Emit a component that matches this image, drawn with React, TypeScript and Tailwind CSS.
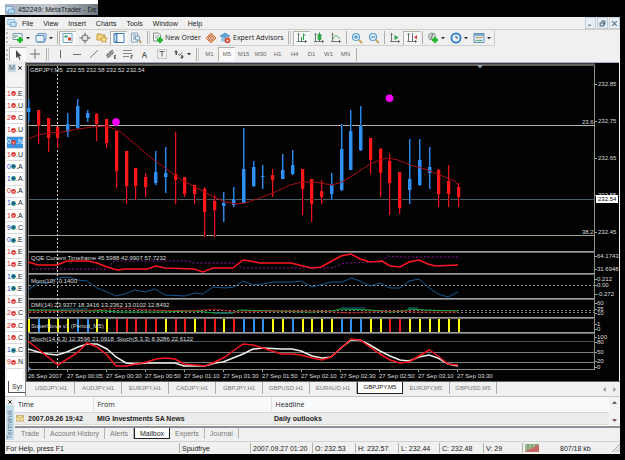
import React from "react";

type Candle = [string, number, number, number, number];

// colour, wick top, wick bottom, body top, body bottom
const candles: Candle[] = [
  ["b", 99, 122, 108, 112], ["r", 110, 144, 110, 126], ["r", 118, 152, 118, 138], ["r", 127, 148, 127, 138],
  ["b", 113, 137, 124, 132], ["b", 99, 129, 106, 128], ["b", 110, 122, 113, 118], ["r", 113, 141, 114, 124],
  ["r", 119, 148, 119, 143], ["r", 131, 188, 131, 171], ["r", 151, 204, 151, 186], ["r", 168, 200, 168, 186],
  ["r", 173, 197, 177, 187], ["b", 151, 185, 172, 183], ["b", 147, 193, 173, 177], ["r", 132, 204, 174, 180],
  ["r", 177, 197, 177, 194], ["r", 185, 204, 185, 194], ["r", 187, 237, 189, 212], ["r", 195, 237, 201, 210],
  ["b", 192, 222, 203, 206], ["b", 187, 207, 199, 205], ["b", 128, 203, 169, 203], ["b", 161, 187, 167, 186],
  ["b", 165, 189, 176, 177], ["r", 169, 197, 175, 180], ["b", 154, 179, 170, 179], ["b", 150, 175, 165, 174],
  ["r", 169, 215, 169, 189], ["r", 179, 222, 179, 204], ["r", 180, 204, 191, 197], ["b", 173, 200, 185, 194],
  ["b", 124, 191, 149, 190], ["b", 110, 170, 131, 170], ["b", 106, 151, 126, 150], ["r", 138, 174, 138, 160],
  ["r", 148, 197, 149, 173], ["r", 154, 215, 161, 183], ["r", 172, 214, 172, 208], ["b", 139, 204, 179, 190],
  ["b", 139, 186, 160, 185], ["b", 147, 189, 167, 173], ["r", 169, 207, 170, 194], ["r", 165, 207, 181, 194],
  ["r", 183, 207, 187, 197],
];
const barX = (i: number) => Math.round(28 + i * 9.77);
const superNova = "ybyyybbyyrrrrryrryrryrbbbyybyyyybbbyyrryyyyyy".split("");
const tone: Record<string, string> = { y: "#ffff10", b: "#2f93f5", r: "#f01c20" };

const ma = "28,139 38,135 48,133 62,132 78,129 92,127 105,126 112,128 122,133 135,144 150,157 165,168 180,179 195,187 210,195 225,202 237,204 245,203 260,198 275,192 290,185 302,182 315,182 332,185 342,182 355,174 370,164 380,160 388,158 398,160 410,165 425,169 440,175 455,181 458,185";
const qqe = "28,262 38,265 57,265 67,261 88,261 97,263 107,267 117,270 125,269 147,269 156,266 165,268 194,269 203,272 213,268 233,268 243,260 250,261 260,263 291,263 303,266 312,268 321,267 330,262 341,256 351,254 360,259 370,262 382,261 390,266 400,267 409,262 419,260 428,264 435,266 458,265";
const qqeSlow = "28,269 106,269 114,261 188,261 194,263 235,263 242,268 331,268 345,263 380,262 388,256 400,257 458,257";
const mom = "28,290 38,283 48,283 58,278 68,277 78,280 87,281 97,288 107,292 116,296 125,294 135,290 145,292 155,289 165,295 185,296 195,293 203,294 213,287 225,288 234,287 243,281 253,285 263,284 273,282 292,282 301,281 312,287 331,282 342,282 351,278 360,281 370,286 380,283 390,288 400,288 409,281 419,279 428,287 438,294 448,297 458,292";
const dmiGreen = "28,310 60,310 70,311 105,311 117,312 160,312 195,311 205,312 215,313 233,313 240,310 270,311 310,312 333,311 340,309 370,310 390,312 404,311 410,309 425,310 458,311";
const dmiRed = "28,312 80,311 105,309 122,308 150,310 190,311 215,309 235,312 280,311 320,311 350,313 365,312 400,311 415,312 440,312 458,312";
const stochWhite = "28,349 38,352 48,354 57,355 67,352 78,347 87,344 97,344 107,349 116,357 126,363 135,364 147,363 175,363 184,366 205,366 215,363 223,362 233,358 243,354 253,349 263,348 282,349 292,349 301,351 312,356 322,358 331,357 341,348 351,340 360,340 370,345 380,351 390,356 400,360 409,361 419,357 429,355 438,358 448,364 458,366";
const stochRed = "28,341 48,357 58,365 77,353 87,343 97,347 107,355 116,366 126,366 147,362 156,359 165,358 175,359 184,364 205,366 215,362 225,357 233,351 243,344 253,345 263,348 272,351 282,354 292,354 301,355 312,358 322,360 331,357 341,348 351,339 360,340 370,347 380,354 390,360 400,363 409,362 419,356 429,350 438,356 448,364 458,365";

const dates = ["26 Sep 2007", "27 Sep 00:05", "27 Sep 00:30", "27 Sep 00:50", "27 Sep 01:10", "27 Sep 01:30", "27 Sep 01:50", "27 Sep 02:10", "27 Sep 02:30", "27 Sep 02:50", "27 Sep 03:10", "27 Sep 03:30"];
const axis: [string, number][] = [
  ["232.85", 84], ["232.75", 121], ["232.65", 158], ["232.55", 195], ["232.45", 232],
  ["64.1743", 256], ["31.6948", 269], ["0.212", 279], ["0.00", 285], ["-0.272", 294],
  ["60", 303], ["35", 309], ["10", 313], ["1", 324], ["0", 329], ["100", 337], ["80", 342], ["50", 352], ["20", 361], ["0", 367],
];
const titles: [string, number][] = [
  ["GBPJPY,M5  232.55 232.58 232.52 232.54", 70],
  ["QQE Current Timeframe 45.5988 42.9907 57.7232", 258],
  ["Mom(10) -0.1400", 281],
  ["DMI(14) 23.9377 18.3416 13.2362 13.0102 12.8492", 305],
  ["SuperNova v3 (Period_M5)", 326],
  ["Stoch(14,3,3) 12.3596 21.0918  Stoch(5,3,3) 8.9286 22.6122", 339],
];

function Chart() {
  return (
    <svg viewBox="26 62 594 319" className="block h-auto w-full font-['Liberation_Sans',sans-serif] text-[6px]" role="img" aria-label="GBPJPY,M5">
      <rect x="26" y="62" width="594" height="319" fill="#020203" />
      <g shapeRendering="crispEdges">
        <rect x="26" y="62" width="594" height="1" fill="#a9a9bd" />
        <rect x="26" y="63" width="569" height="1" fill="#3c3c3c" />
        <rect x="26" y="64" width="569" height="2" fill="#62645c" />
        <rect x="26" y="63" width="1" height="318" fill="#555" />
        <rect x="28" y="66" width="1" height="304" fill="#70746c" />
        <rect x="594" y="66" width="1" height="304" fill="#8b9482" />
        <rect x="619" y="62" width="1" height="319" fill="#f4f4f4" />
        {[251, 273, 298, 317, 332].map((y) => (
          <g key={y}>
            <rect x="28" y={y} width="567" height="1" fill="#9c9c9c" />
            <rect x="28" y={y + 1} width="567" height="1" fill="#6b6b6b" />
          </g>
        ))}
        <rect x="28" y="369" width="567" height="1" fill="#8a8f84" />
        <rect x="28" y="125" width="567" height="1" fill="#b4b4b4" />
        <rect x="28" y="199" width="567" height="1" fill="#4a5c68" />
        <rect x="28" y="235" width="567" height="1" fill="#99a28c" />
        <rect x="28" y="341" width="567" height="1" fill="#46525c" />
        <rect x="28" y="352" width="567" height="1" fill="#7c827c" />
        <rect x="28" y="362" width="567" height="1" fill="#7c827c" />
        <path d="M29 285.5H594" stroke="#a0a0a0" strokeDasharray="2 2" />
        <path d="M29 310.5H594M29 312.5H594" stroke="#808080" strokeDasharray="2 2" />
      </g>
      <path d="M57.5 66V370" stroke="#d0d0d0" strokeDasharray="2 2" shapeRendering="crispEdges" />
      <g shapeRendering="crispEdges">
        {candles.map(([c, wt, wb, bt, bb], i) => (
          <g key={i}>
            <rect x={barX(i)} y={wt} width="1" height={wb - wt} fill={c === "b" ? "#2a86e0" : "#e8121c"} />
            <rect x={barX(i) + 1} y={wt} width="1" height={wb - wt} fill={c === "b" ? "#0d3f70" : "#3c0408"} />
            <rect x={barX(i) - 1} y={bt} width="3" height={bb - bt} fill={c === "b" ? "#2f90f0" : "#ff1616"} />
            <rect x={barX(i) + 2} y={bt} width="1" height={bb - bt} fill={c === "b" ? "#0f4580" : "#4a0508"} />
          </g>
        ))}
        {superNova.map((c, i) => (
          <rect key={i} x={barX(i)} y="319" width="2" height="13" fill={tone[c]} />
        ))}
      </g>
      <g fill="none">
        <polyline points={ma} stroke="#a80c14" />
        <polyline points={qqeSlow} stroke="#8a1a9c" strokeDasharray="2 2" />
        <polyline points={qqe} stroke="#ff1620" strokeWidth="1.5" />
        <polyline points={mom} stroke="#17588f" />
        <polyline points={dmiGreen} stroke="#12b03a" />
        <polyline points={dmiRed} stroke="#c01820" strokeDasharray="4 1" />
        <path d="M60 309H88M215 313H233M341 308H365M408 308H418" stroke="#1a6f86" />
        <polyline points={stochWhite} stroke="#f0f0ea" strokeWidth="1.5" />
        <polyline points={stochRed} stroke="#f8141e" strokeWidth="1.5" />
      </g>
      {titles.map(([t, y]) => (
        <text key={t} x={y === 70 ? 30 : 31} y={y + 2} xmlSpace="preserve" fill="#dcdcdc">{t}</text>
      ))}
      <circle cx="116" cy="122" r="3.8" fill="#ff00ff" />
      <circle cx="389.5" cy="98.3" r="3.8" fill="#ff00ff" />
      <path d="M477 65h6l-3 3.5z" fill="#8ea4b0" />
      <path d="M28 366v4h4z" fill="#7f9ac4" />
      <g fill="#dcdcdc">
        <text x="582" y="124">23.6</text>
        <text x="582" y="234">38.2</text>
        {axis.map(([t, y], i) => (
          <g key={i}>
            <path d={`M595 ${y + 0.5}h2`} stroke="#a0a090" />
            <text x={y > 250 ? 597 : 598} y={y + 2}>{t}</text>
          </g>
        ))}
        {dates.map((d, i) => (
          <g key={d}>
            <path d={`M${28.5 + i * 39} 370v2`} stroke="#a0a090" />
            <text x={28 + i * 39} y="378">{d}</text>
          </g>
        ))}
        <rect x="596" y="195" width="22" height="8" fill="#fff" />
        <text x="598" y="201" fill="#111">232.54</text>
      </g>
    </svg>
  );
}

const Svg = ({ children, s = 12 }: { children: React.ReactNode; s?: number }) => (
  <svg viewBox="0 0 12 12" width={s} height={s} className="shrink-0" fill="none" aria-hidden="true">{children}</svg>
);
const Plus = () => <path d="M8 5v6M5 8h6" stroke="#19b52b" strokeWidth="2.4" />;
const Axes = () => <path d="M2.5 1v9M1 9.5h10M1.5 2.5h2M9.5 8v3" stroke="#6f756f" />;

const icons: Record<string, React.ReactNode> = {
  newChart: <Svg><path d="M1 1.5h9v6H1z" fill="#eef3f8" stroke="#7e99b0" /><path d="M3 3v3M5 3v2" stroke="#4a9a60" /><Plus /></Svg>,
  profiles: <Svg><path d="M3 1.5h8v6H3z" fill="#cfe2f4" stroke="#6e9cc4" /><path d="M1 3.5h8v6H1z" fill="#e8f1f9" stroke="#5f8fba" /><path d="M1 9h8l2-3v3l-2 2H2z" fill="#7ea9d0" /></Svg>,
  market: <Svg><path d="M1 1.5h9v9H1z" fill="#f4fafd" stroke="#6fa6c4" /><path d="M2.5 3.5h3v2h-3z" fill="#2da05a" /><path d="M6 5.5h3v3H6z" fill="#d8402c" /></Svg>,
  target: <Svg><circle cx="6" cy="6" r="3.2" stroke="#6a6e72" /><path d="M6 .5v4M6 7.5v4M.5 6h4M7.5 6h4" stroke="#6a6e72" /></Svg>,
  navigator: <Svg><path d="M1 2h4l1 1h3v5H1z" fill="#f5d680" stroke="#c99a3c" /><path d="m8 4 1 2.2 2.5.2-1.9 1.6.6 2.4L8 9.2l-2.2 1.2.6-2.4-1.9-1.6 2.5-.2z" fill="#ffe79a" stroke="#c58f35" strokeWidth=".8" /></Svg>,
  terminal: <Svg><path d="M1 1.5h10v9H1z" fill="#fff" stroke="#3e7cb8" /><path d="M1.5 2h3v8h-3z" fill="#5a92ca" /><path d="M2.5 3v6" stroke="#cfe2f4" /></Svg>,
  tester: <Svg><path d="M1.5 1h6v9h-6z" fill="#eef3f7" stroke="#8ca4b8" /><path d="M3 3h3M3 5h3M3 7h2" stroke="#7fa0b8" /><circle cx="7.5" cy="6" r="2.3" fill="#d8ecf8" stroke="#6b98bc" /><path d="m9 8 2 3" stroke="#b08a50" strokeWidth="1.5" /></Svg>,
  order: <Svg><path d="M1.5 1h5l2 2v6h-7z" fill="#f6f7f6" stroke="#8a948c" /><path d="M3 4h4M3 6h3" stroke="#9aa49a" /><Plus /></Svg>,
  editor: <Svg><path d="m6 1 5 5-5 5-5-5z" fill="#f7c89a" stroke="#d0733c" /><circle cx="6" cy="6" r="2.4" fill="#fff0dc" stroke="#c05a38" /><path d="M6 4.5v3" stroke="#a83020" /></Svg>,
  experts: <Svg><path d="m1 4 5-3 5 3-5 2z" fill="#5fa8dc" stroke="#3a7cb4" strokeWidth=".6" /><path d="M2 5v4l4 1V6z" fill="#8ec4ea" /><path d="M6 6l4-1.5V8L6 10z" fill="#e2b884" /><circle cx="8.5" cy="8.5" r="2.8" fill="#dc3a28" /><path d="M7.5 7.5h2v2h-2z" fill="#fff" /></Svg>,
  bars: <Svg><Axes /><path d="M5.5 5v4M7.5 1.5V8M7.5 3h2" stroke="#2fa24c" /></Svg>,
  candle: <Svg><Axes /><path d="M6.5.5V9" stroke="#2b8a3e" /><path d="M5 2.5h3v5H5z" fill="#2fbb4c" stroke="#23883a" strokeWidth=".6" /></Svg>,
  line: <Svg><Axes /><path d="M3 7c2-5 4-4 7 0" stroke="#4da860" /></Svg>,
  zoomIn: <Svg><circle cx="5" cy="5" r="3.5" fill="#dff0fb" stroke="#5b9ed0" strokeWidth="1.2" /><path d="M3 5h4M5 3v4" stroke="#3c82bc" /><path d="m8 8 3 3" stroke="#c4a04c" strokeWidth="1.8" /></Svg>,
  zoomOut: <Svg><circle cx="5" cy="5" r="3.5" fill="#dff0fb" stroke="#5b9ed0" strokeWidth="1.2" /><path d="M3 5h4" stroke="#3c82bc" /><path d="m8 8 3 3" stroke="#c4a04c" strokeWidth="1.8" /></Svg>,
  scroll: <Svg><Axes /><path d="m5.5 3 4 2.5-4 2.5z" fill="#2fa24c" /></Svg>,
  shift: <Svg><Axes /><path d="M6.5 1v8" stroke="#64748a" /><path d="m11 3-3 2.2 3 2.2z" fill="#c8402c" /></Svg>,
  indicator: <Svg><circle cx="5" cy="4.5" r="3.5" fill="#d4dad4" stroke="#8d958d" /><path d="M4 7c1-1 .5-5 2.5-5" stroke="#606860" /><Plus /></Svg>,
  clock: <Svg><circle cx="6" cy="6" r="4.6" fill="#e6f2fc" stroke="#2b7cc8" strokeWidth="1.8" /><path d="M6 3.5V6h2" stroke="#3c5878" /></Svg>,
  template: <Svg><path d="M1 1.5h10v9H1z" fill="#eaf3fa" stroke="#5f92b8" /><path d="M1 3h10" stroke="#5f92b8" strokeWidth="1.5" /><path d="m2.5 6 2-1 2 1 3-1" stroke="#b08038" /><path d="m2.5 9 2-1 2 1 3-1" stroke="#3a9a58" /></Svg>,
  cursor: <Svg><path d="M4 1v8l2-1.5L7.5 11l1-.5L7.3 7.2 9.5 7z" fill="#4a4a4a" /></Svg>,
  cross: <Svg><path d="M6 1v10M1 6h10" stroke="#6c6c6c" /></Svg>,
  vline: <Svg><path d="M6.5 2v8" stroke="#6c6c6c" /></Svg>,
  hline: <Svg><path d="M2 6.5h8" stroke="#6c6c6c" /></Svg>,
  trend: <Svg><path d="m2 10 8-8" stroke="#7c7c7c" /></Svg>,
  channel: <Svg><path d="m1 8 7-6M2 10l7-6M3 5v5M5 3v6M7 2v5" stroke="#5c5c5c" strokeWidth=".9" /><path d="M11 7.5H9.5v3H11M9.5 9H11" stroke="#444" strokeWidth=".8" /></Svg>,
  fibo: <Svg><path d="M1 2.5h9M1 5.5h9M1 8.5h6" stroke="#858585" /><path d="M11 7.5H9v3.5M9 9h1.5" stroke="#444" strokeWidth=".8" /></Svg>,
  label: <Svg><path d="M1.5 1.5h9v9h-9z" stroke="#999" strokeDasharray="1 1" /><path d="M3.5 3.5h5M6 3.5v5" stroke="#606060" /></Svg>,
  arrows: <Svg><path d="M1 4.5 3 2l2 2.5H4V7H2.5V4.5z" fill="#505050" /><path d="m5 6 1.5 1.5L9 4.5" stroke="#666" /><path d="m7 9 2 2 2-2.5H9.8V7h-1.5v2z" fill="#505050" /></Svg>,
};

function Tool({ icon, label, on, menu, children }: { icon?: string; label: string; on?: boolean; menu?: boolean; children?: React.ReactNode }) {
  return (
    <button
      aria-label={label}
      className={`flex h-[14px] shrink-0 items-center justify-center text-[#666] ${menu ? "w-[23px] gap-[2px]" : "w-[17px]"} ${on ? "border-l border-t border-[#b4b4ac] bg-[#f9f9f9]" : ""}`}
    >
      {icon ? icons[icon] : children}
      {menu && <Svg s={4}><path d="M0 3h12L6 10z" fill="#333" /></Svg>}
    </button>
  );
}
const Grip = ({ wide }: { wide?: boolean }) => (
  <span className={`flex h-[13px] shrink-0 items-center justify-center ${wide ? "w-[8px]" : "w-[4px]"}`}>
    <span className={`h-full border-l border-[#b0b0a8] ${wide ? "w-[3px] border-r border-r-[#c8c8c8]" : "w-px"}`} />
  </span>
);
const Dots = () => <span className="mx-px h-[11px] w-[2px] shrink-0 border-l-2 border-dotted border-[#b8b8b8]" />;

const menus = ["File", "View", "Insert", "Charts", "Tools", "Window", "Help"];
const frames = ["M1", "M5", "M15", "M30", "H1", "H4", "D1", "W1", "MN"];
const chartTabs = ["USDJPY,H1", "AUDJPY,H1", "EURJPY,H1", "CADJPY,H1", "GBPJPY,H1", "GBPUSD,H1", "EURAUD,H1", "GBPJPY,M5", "EURJPY,M5", "GBPUSD,M5"];
const terminalTabs = ["Trade", "Account History", "Alerts", "Mailbox", "Experts", "Journal"];
const quotes = ["r1E", "r1U", "r2C", "r1U", "s0N", "r1U", "b0A", "b1A", "r0A", "b1A", "r1A", "b9C", "b0E", "r1E", "r1E", "b1E", "b1E", "r1E", "r2C", "r2C", "r1C", "b1C", "r9N"];

function MarketWatch() {
  return (
    <aside className="flex w-[21px] shrink-0 flex-col border-r border-[#8a8a8a] bg-[#f0f0f0] font-['Liberation_Sans',sans-serif]">
      <div className="flex h-[12px] items-center justify-between px-[3px]">
        <span className="bg-[#c9d8e2] px-px leading-[8px] text-[#5c6c78]">M</span>
        <button aria-label="Close market watch"><Svg s={4}><path d="m1 1 10 10M11 1 1 11" stroke="#222" strokeWidth="3" /></Svg></button>
      </div>
      <div className="mx-[2px] h-[14px] border-b border-[#ccc] bg-[#f4f4f4]" />
      <table className="ml-[2px] h-[281px] w-[16px] table-fixed border-collapse bg-white">
        <tbody>
          {quotes.map((q, i) => (
            <tr key={i} className={`border-b border-[#dadada] leading-[8px] ${q[0] === "s" ? "bg-[#3a94e4] text-white" : q[0] === "r" ? "text-[#e02424]" : "text-[#3038c8]"}`}>
              <td className="w-[9px] p-0">
                <span className="flex items-center">
                  {q[1]}
                  <Svg s={5}><circle cx="6" cy="6" r="5.8" fill={q[0] === "b" ? "#1f8a70" : "#dc3030"} /><path d={q[0] === "b" ? "M6 2 10 7H2z" : "M6 10 10 5H2z"} fill={q[0] === "b" ? "#2a3cc0" : "#ffb0a0"} /></Svg>
                </span>
              </td>
              <td className="w-[7px] p-0"><span className={q[0] === "s" ? "text-white" : "text-[#222]"}>.{q[2]}</span></td>
            </tr>
          ))}
        </tbody>
      </table>
      <div className="mx-[2px] flex-1 bg-white" />
      <div className="flex h-[15px] justify-end bg-white pl-[3px]">
        <button className="mb-[3px] w-[17px] border-b border-l border-[#555] bg-white pl-[3px] text-left leading-[9px] text-[#333]">Syr</button>
      </div>
    </aside>
  );
}

export default function App() {
  const cell = "flex h-[10px] items-center border-l border-[#b2b2aa] pl-[2px]";
  return (
    <div className="min-h-screen bg-black font-['Open_Sans','Liberation_Sans',sans-serif] text-[7px] leading-[9px] text-[#222]">
      <header className="flex h-[17px] items-start">
        <div className="flex h-[15px] w-[98px] items-end bg-white pl-[5px]">
          <div className="flex h-[11px] w-full items-center gap-[3px] whitespace-nowrap bg-linear-to-r from-[#a9b6c4] via-[#c3c7cb] to-[#6d7680] font-['Liberation_Sans',sans-serif]">
            <Svg s={10}><path d="M1 2h8v6H1z" fill="#e4f0fa" stroke="#5f9ccc" /><path d="M4 5h7v5H4z" fill="#b8d8f0" stroke="#5f9ccc" /></Svg>
            <span>452249: MetaTrader - De</span>
          </div>
        </div>
      </header>
      <main className="mx-[5px] bg-[#f0f0f0]">
        <nav className="flex h-[13px] items-center border-b border-[#cfccc4] pl-[2px]">
          <Svg s={10}><path d="M1 2h8v6H1z" fill="#e4f0fa" stroke="#6fa8d4" /><path d="M4 5h7v5H4z" fill="#d0e6f6" stroke="#5f9ccc" /></Svg>
          <div className="flex gap-[10px] pl-[5px] font-['Liberation_Sans',sans-serif]">
            {menus.map((m) => <button key={m}>{m}</button>)}
          </div>
          <div className="ml-auto flex h-full gap-px">
            {["M2 9h5", "M4 2h6v5H8M2 5h6v5H2z", "m2 2 8 8M10 2l-8 8"].map((d, i) => (
              <button key={d} aria-label={["Minimize", "Restore", "Close"][i]} className="flex h-[12px] w-[11px] items-center justify-center border border-[#c4ccd4] bg-[#e6f0f8]">
                <Svg s={7}><path d={d} stroke="#5f7488" strokeWidth="2" /></Svg>
              </button>
            ))}
          </div>
        </nav>
        <div className="flex h-[16px] w-[490px] items-center border-b border-r border-[#d0d0d0]">
          <Dots />
          <Tool icon="newChart" label="New chart" menu />
          <Tool icon="profiles" label="Profiles" menu />
          <Grip />
          <Tool icon="market" label="Market watch" on />
          <Tool icon="target" label="Data window" />
          <Tool icon="navigator" label="Navigator" />
          <Tool icon="terminal" label="Terminal" on />
          <Tool icon="tester" label="Strategy tester" />
          <Grip wide />
          <button className="flex w-[50px] shrink-0 items-center gap-px whitespace-nowrap">{icons.order}New Order</button>
          <Tool icon="editor" label="MetaEditor" />
          <button className="flex w-[66px] shrink-0 items-center gap-[2px] whitespace-nowrap">{icons.experts}Expert Advisors</button>
          <Grip wide />
          <Tool icon="bars" label="Bar chart" on />
          <Tool icon="candle" label="Candlesticks" />
          <Tool icon="line" label="Line chart" />
          <Grip />
          <Tool icon="zoomIn" label="Zoom in" />
          <Tool icon="zoomOut" label="Zoom out" />
          <Grip />
          <Tool icon="scroll" label="Auto scroll" />
          <Tool icon="shift" label="Chart shift" on />
          <Grip />
          <Tool icon="indicator" label="Indicators" menu />
          <Tool icon="clock" label="Periods" menu />
          <Tool icon="template" label="Templates" menu />
        </div>
        <div className="flex h-[16px] items-center">
          <Dots />
          <Tool icon="cursor" label="Cursor" on />
          <Tool icon="cross" label="Crosshair" />
          <Grip wide />
          <Tool icon="vline" label="Vertical line" />
          <Tool icon="hline" label="Horizontal line" />
          <Tool icon="trend" label="Trendline" />
          <Tool icon="channel" label="Equidistant channel" />
          <Tool icon="fibo" label="Fibonacci" />
          <Tool label="Text"><span className="text-[8px] font-semibold text-[#555]">A</span></Tool>
          <Tool icon="label" label="Text label" />
          <Tool icon="arrows" label="Arrows" menu />
          <Grip wide />
          {frames.map((f) => <Tool key={f} label={f} on={f === "M5"}><span className="font-['Liberation_Sans',sans-serif] text-[6px]">{f}</span></Tool>)}
          <Grip />
        </div>
        <div className="flex">
          <MarketWatch />
          <div className="min-w-0 flex-1">
            <Chart />
            <div className="flex h-[15px] border-t border-[#666]">
              <div className="flex h-[13px] items-start pl-[2px] font-['Liberation_Sans',sans-serif] text-[6px]" role="tablist">
                {chartTabs.map((t, i) => (
                  <button key={t} role="tab" aria-selected={i === 7} className={i === 7 ? "h-[12px] w-[46px] border-x border-b border-[#222] bg-white text-[#111]" : "flex h-[12px] w-[47px] items-center justify-center border-r border-[#aaa] leading-[9px] text-[#777]"}>{t}</button>
                ))}
              </div>
              <div className="ml-auto flex items-center gap-[5px] pr-[3px]">
                <button aria-label="Scroll tabs left"><Svg s={5}><path d="M9 0v12L2 6z" fill="#999" /></Svg></button>
                <button aria-label="Scroll tabs right"><Svg s={5}><path d="M3 0v12l7-6z" fill="#999" /></Svg></button>
              </div>
            </div>
          </div>
        </div>
        <section className="flex h-[45px] border-t border-[#c8c4bc]">
          <div className="flex w-[10px] shrink-0 flex-col items-center pt-px">
            <button aria-label="Close terminal" className="flex h-[7px] items-center"><Svg s={4}><path d="m1 1 10 10M11 1 1 11" stroke="#222" strokeWidth="3" /></Svg></button>
            <span className="flex h-[35px] w-[8px] rotate-180 items-center bg-[#c5dcea] pt-px leading-[8px] text-[#5a7488] [writing-mode:vertical-rl]">Terminal</span>
          </div>
          <div className="flex min-w-0 flex-1 flex-col">
            <div className="flex h-[31px] border-b-2 border-[#8e9298] bg-white">
              <table className="h-[27px] flex-1 table-fixed border-collapse text-left">
                <thead>
                  <tr className="h-[15px] border-b border-[#d4d4d4] bg-[#f8f9fa]">
                    <th className="w-[78px] p-0 pl-[3px] font-medium">Time</th>
                    <th className="w-[178px] border-l border-[#e2e2e2] p-0 pl-[4px] font-medium">From</th>
                    <th className="border-l border-[#e2e2e2] p-0 pl-[4px] font-medium">Headline</th>
                  </tr>
                </thead>
                <tbody>
                  <tr className="h-[12px] border-b border-[#ddd8cc] bg-[#ececec] font-['Liberation_Sans',sans-serif] font-bold">
                    <td className="p-0 pl-px"><span className="flex items-center gap-[4px]"><Svg s={8}><path d="M0 2.5h12v8H0z" fill="#f6e6a8" stroke="#a88c40" /><path d="m0 3 6 4 6-4" stroke="#a88c40" /></Svg>2007.09.26 19:42</span></td>
                    <td className="p-0 pl-[4px]">MIG Investments SA News</td>
                    <td className="p-0 pl-[3px]">Daily outlooks</td>
                  </tr>
                </tbody>
              </table>
              <div className="flex w-[11px] flex-col items-center justify-between bg-[#f2f2f2] py-[3px]">
                <button aria-label="Scroll up"><Svg s={5}><path d="M0 9h12L6 3z" fill="#444" /></Svg></button>
                <button aria-label="Scroll down"><Svg s={5}><path d="M0 3h12L6 9z" fill="#644" /></Svg></button>
              </div>
            </div>
            <div className="flex h-[12px] pl-px font-['Liberation_Sans',sans-serif]" role="tablist">
              {terminalTabs.map((t) => (
                <button key={t} role="tab" aria-selected={t === "Mailbox"} className={t === "Mailbox" ? "h-[11px] border-x border-b border-[#222] bg-white px-[5px] text-[#222]" : "flex h-[11px] items-center border-r border-[#b4b4b4] px-[5px] text-[#777]"}>{t}</button>
              ))}
            </div>
          </div>
        </section>
        <footer className="flex h-[13px] items-center whitespace-nowrap border-t border-[#d2d2d2] font-['Liberation_Sans',sans-serif]">
          <span className="flex-1 pl-px">For Help, press F1</span>
          <span className={`${cell} w-[71px]`}>Spudfrye</span>
          <span className={`${cell} w-[62px]`}>2007.09.27 01:20</span>
          <span className={`${cell} w-[43px]`}>O: 232.53</span>
          <span className={`${cell} w-[43px]`}>H: 232.57</span>
          <span className={`${cell} w-[41px]`}>L: 232.44</span>
          <span className={`${cell} w-[44px]`}>C: 232.48</span>
          <span className={`${cell} w-[39px]`}>V: 29</span>
          <span className={`${cell} w-[98px]`}>
            <svg width="15" height="8" viewBox="0 0 15 8" aria-hidden="true">
              {[0, 1, 2, 3, 4, 5, 6].map((i) => (
                <g key={i}>
                  <path d={`M${i * 2 + 1} 0v${7 - i}`} stroke={i % 2 ? "#4a8a3c" : "#8aa070"} strokeWidth="1.4" />
                  <path d={`M${i * 2 + 1} 8v${-1 - i}`} stroke="#b82c28" strokeWidth="1.4" />
                </g>
              ))}
            </svg>
            <span className="pl-[20px]">807/18 kb</span>
            <svg width="8" height="8" viewBox="0 0 8 8" className="ml-auto" aria-hidden="true"><path d="M0 8 8 0M3 8l5-5M6 8l2-2" stroke="#aaa" /></svg>
          </span>
        </footer>
      </main>
    </div>
  );
}
